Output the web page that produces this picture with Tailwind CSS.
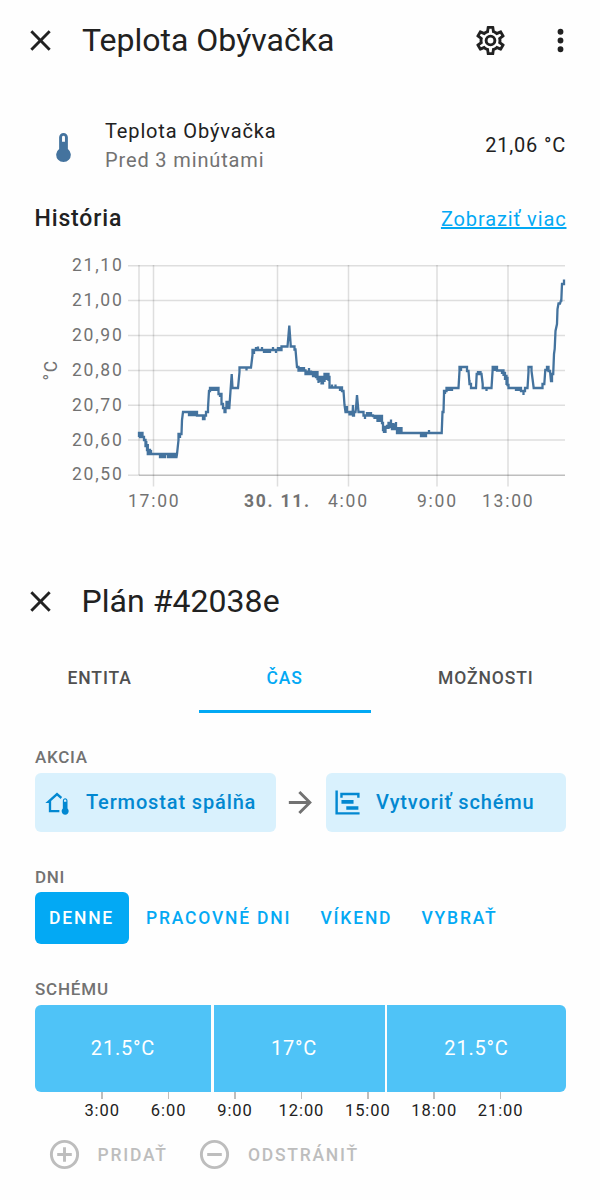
<!DOCTYPE html>
<html lang="sk">
<head>
<meta charset="utf-8">
<title>Teplota Obývačka</title>
<script src="https://cdn.jsdelivr.net/npm/@tailwindcss/browser@4"></script>
</head>
<body class="bg-[#fefefe] font-['Roboto',sans-serif] text-[#212121]">
<main class="flex h-[1200px] w-[600px] flex-col overflow-hidden">

  <!-- Entity dialog -->
  <section class="flex h-[561px] flex-col">
    <header class="flex h-[81px] items-center pl-[23px] pr-[22.5px]">
      <svg class="size-[35px] shrink-0" viewBox="0 0 24 24" fill="currentColor"><path d="M19,6.41L17.59,5L12,10.59L6.41,5L5,6.41L10.59,12L5,17.59L6.41,19L12,13.41L17.59,19L19,17.59L13.41,12L19,6.41Z"/></svg>
      <h1 class="ml-[24px] grow whitespace-nowrap pb-[2px] text-[32px] leading-[40px]">Teplota Obývačka</h1>
      <svg class="size-[35px] shrink-0" viewBox="0 0 24 24" fill="currentColor"><path d="M12,8A4,4 0 0,1 16,12A4,4 0 0,1 12,16A4,4 0 0,1 8,12A4,4 0 0,1 12,8M12,10A2,2 0 0,0 10,12A2,2 0 0,0 12,14A2,2 0 0,0 14,12A2,2 0 0,0 12,10M10,22C9.75,22 9.54,21.82 9.5,21.58L9.13,18.93C8.5,18.68 7.96,18.34 7.44,17.94L4.95,18.95C4.73,19.03 4.46,18.95 4.34,18.73L2.34,15.27C2.21,15.05 2.27,14.78 2.46,14.63L4.57,12.97L4.5,12L4.57,11L2.46,9.37C2.27,9.22 2.21,8.95 2.34,8.73L4.34,5.27C4.46,5.05 4.73,4.96 4.95,5.05L7.44,6.05C7.96,5.66 8.5,5.32 9.13,5.07L9.5,2.42C9.54,2.18 9.75,2 10,2H14C14.25,2 14.46,2.18 14.5,2.42L14.87,5.07C15.5,5.32 16.04,5.66 16.56,6.05L19.05,5.05C19.27,4.96 19.54,5.05 19.66,5.27L21.66,8.73C21.79,8.95 21.73,9.22 21.54,9.37L19.43,11L19.5,12L19.43,13L21.54,14.63C21.73,14.78 21.79,15.05 21.66,15.27L19.66,18.73C19.54,18.95 19.27,19.04 19.05,18.95L16.56,17.95C16.04,18.34 15.5,18.68 14.87,18.93L14.5,21.58C14.46,21.82 14.25,22 14,22H10M11.25,4L10.88,6.61C9.68,6.86 8.62,7.5 7.85,8.39L5.44,7.35L4.69,8.65L6.8,10.2C6.4,11.37 6.4,12.64 6.8,13.8L4.68,15.36L5.43,16.66L7.86,15.62C8.63,16.5 9.68,17.14 10.87,17.38L11.24,20H12.76L13.13,17.39C14.32,17.14 15.37,16.5 16.14,15.62L18.57,16.66L19.32,15.36L17.2,13.81C17.6,12.64 17.6,11.37 17.2,10.2L19.31,8.65L18.56,7.35L16.15,8.39C15.38,7.5 14.32,6.86 13.12,6.62L12.75,4H11.25Z"/></svg>
      <svg class="ml-[35px] size-[35px] shrink-0" viewBox="0 0 24 24" fill="currentColor"><path d="M12,16A2,2 0 0,1 14,18A2,2 0 0,1 12,20A2,2 0 0,1 10,18A2,2 0 0,1 12,16M12,10A2,2 0 0,1 14,12A2,2 0 0,1 12,14A2,2 0 0,1 10,12A2,2 0 0,1 12,10M12,4A2,2 0 0,1 14,6A2,2 0 0,1 12,8A2,2 0 0,1 10,6A2,2 0 0,1 12,4Z"/></svg>
    </header>

    <div class="mt-[35px] flex h-[59px] items-center pl-[46px] pr-[34px] tracking-[0.86px]">
      <svg class="mt-[3px] size-[35px] shrink-0 text-[#44739e]" viewBox="0 0 24 24" fill="currentColor"><path d="M15 13V5A3 3 0 0 0 9 5V13A5 5 0 1 0 15 13M12 4A1 1 0 0 1 13 5V8H11V5A1 1 0 0 1 12 4Z"/></svg>
      <div class="ml-[24px] grow text-[20px] leading-[29px]">
        <div>Teplota Obývačka</div>
        <div class="text-[#727272]">Pred 3 minútami</div>
      </div>
      <div class="text-[20px] leading-[29px] tracking-[0.8px]">21,06 °C</div>
    </div>

    <div class="mt-[29px] flex h-[30px] items-center justify-between pl-[34.5px] pr-[33.5px]">
      <h2 class="text-[23px] font-medium leading-[30px] tracking-[0.86px]">História</h2>
      <a class="text-[20px] leading-[30px] tracking-[0.87px] text-[#03a9f4] underline">Zobraziť viac</a>
    </div>

    <!-- History chart -->
    <svg class="mt-[16px] h-[270px] w-[600px] shrink-0" viewBox="0 250 600 270" font-family="Roboto, sans-serif" font-size="17.5" letter-spacing="1.74" fill="#727272">
      <g stroke="#000" stroke-opacity=".125" stroke-width="1.5">
        <path d="M128 265.7H565M128 300.6H565M128 335.5H565M128 370.5H565M128 405.2H565M128 440.1H565"/>
        <path d="M139 265V475M153.5 265V486.5M277.5 265V486.5M348.5 265V486.5M437 265V486.5M508 265V486.5"/>
        <path d="M128 475.2H139"/>
        <path d="M139 475.2H565" stroke-opacity=".25"/>
      </g>
      <g>
        <text x="72" y="271.2">21,10</text>
        <text x="72" y="306.4">21,00</text>
        <text x="72" y="341.3">20,90</text>
        <text x="72" y="376.1">20,80</text>
        <text x="72" y="411">20,70</text>
        <text x="72" y="445.9">20,60</text>
        <text x="72" y="480.3">20,50</text>
        <text x="128" y="506.8">17:00</text>
        <text x="244" y="506.8" font-weight="700">30. 11.</text>
        <text x="328" y="506.8">4:00</text>
        <text x="417" y="506.8">9:00</text>
        <text x="482" y="506.8">13:00</text>
        <text transform="translate(56.7 380.5) rotate(-90)">°C</text>
      </g>
      <path fill="none" stroke="#44739e" stroke-width="2.3" stroke-linejoin="miter" stroke-miterlimit="2" d="M139 437V433H140V437H141V433H142.5V437H144V440H145.5V446H146.3V441V446H147V450H147.8V444V454H149V450H150V454H151V450V454H160V457H161V454H162V457H163V454H164V457H165V454H168V457H169V454H170.5V457H172V454H173V457H174V454H175V457H176.5L177 454L178.5 440V434H180V438V434H181.5L182 420L183 412H189V415H190V412H191V415H192V412H193V415H194V412H195V415H196V412H197V415.5H203V419H204.5V415.5H206V412H208V408L209 391H210V388H211.5V391V388H213V391V388H215V391V388H217V391V388H218.5V394H220V397V394H221.5V404H223V408H224.5V412H225.5V408H226.5V402H227.5V409V402L228.5 408H229.3L230.5 391L231.7 374L232.5 388H238L239.5 372V367.5H246.5V370.5V367.5H251L252.5 355V350H254V354V350H256V347V350H258V346.5V350H262V347V350H264V353V350H266V353V350H268V353V350H270V353V350H273V347V350H276V353V350H278V347V350H280V347V350H281.5V346.5H287.5L288.5 335L289.3 325.5L290.7 345V346.5H294.5V349.5H295.5L297 367H298.5V370.5H300V367V370.5H302V367V370.5H304V367V370.5H305.5V374H307V370.5V374H309V368V374H311V370.5V374H313V371V376H314.5V371V376H316V371V377H317.5V371V379H318.5V383V377H320V382V377H321.5V384.5V378H323V384.5V377H324.5V382V374H326V380V374H327.5V380V374H328.5V381V377H329.5V387.5H332V384.5V387.5H335.5V384.5V387.5H340V391V387.5H342V391H343.5L344.5 405L345.5 412H347V406V412H349.5V415.5V412H351V415.5V412H352.5V415.5L353 405V415.5H354V412H355.5L356 408L357 395L358.5 412H363.5V415.5H365V419V415.5H367V412V415.5H369V412V415.5H371V412V415.5H373V416H374.5V419V416H376V419V416H377.5V422V416H379V422V416H380.5V422V416H382V423H383V430H384V433V427H385.5V433V427H387V429V426H388.5V429V423H390V427H391V419.5V427H392V423V429H393.5V423V429H395V424V429H396V422V429H397V427V433H398.5V427V433H400V427V433H401.5V427V433H421V436H422V433H423V436H424V433H425V436H426V433H429V430V433H441.7L442.5 412H443.5L444 394V391H445V394V391H446.5V388H448V391V388H450V391V388H452V391V388H458.5L459.5 371V367H461V371V367H467V371H468.5L469.5 384V380V384H471V388H476L476.7 374H478V371V374H479V371V374H480.5V371V374H481.5L482.7 384V388H486.5V391V388H491.5L492.7 369V367H494V371V367H496V371V367H497V370.5H502V374V370.5H503.5V376V373H505V380V376H506.5V385V378H507.5V385H508.5V388H516V391V388H518V391V388H520V391V388H521V391H523.5V395V391H525V388H527.5L528.5 372V367H531.5V371L533.7 388H542.5V384H544.3L545.3 370H547V367H548.5V371H550L551 381H552V374H553.2L554 354L554.7 349L555.5 331L557 324L557.5 309L558.5 303.5H560L561 300.5H561.3L562 284H564V279.5"/>
    </svg>
  </section>

  <!-- Schedule dialog -->
  <section class="flex h-[639px] flex-col">
    <header class="flex h-[81px] items-center pl-[23px]">
      <svg class="size-[35px] shrink-0" viewBox="0 0 24 24" fill="currentColor"><path d="M19,6.41L17.59,5L12,10.59L6.41,5L5,6.41L10.59,12L5,17.59L6.41,19L12,13.41L17.59,19L19,17.59L13.41,12L19,6.41Z"/></svg>
      <h1 class="ml-[23.5px] whitespace-nowrap pb-[2px] text-[32px] leading-[40px] tracking-[0.05px]">Plán #42038e</h1>
    </header>

    <nav class="flex h-[71px] text-[17.5px] font-medium leading-[73px] tracking-[0.9px] text-[#505050]">
      <div class="w-[199px] pl-[67.5px]">ENTITA</div>
      <div class="w-[171.5px] border-b-[3px] border-[#03a9f4] pl-[67.5px] text-[#03a9f4]">ČAS</div>
      <div class="pl-[67.5px]">MOŽNOSTI</div>
    </nav>

    <div class="flex flex-col pl-[35px] pr-[34px]">
      <h3 class="mt-[33px] h-[27px] text-[17px] font-medium leading-[22px] tracking-[0.72px] text-[#727272]">AKCIA</h3>
      <div class="flex h-[59px] items-center justify-between text-[20px] font-medium tracking-[0.86px] text-[#0288d1]">
        <div class="flex h-full w-[240.5px] items-center rounded-md bg-[#d9f1fd] pl-[8px]">
          <svg class="size-[28px] shrink-0" viewBox="0 0 24 24" fill="currentColor"><path d="M19 8C20.11 8 21 8.9 21 10V16.76C21.61 17.31 22 18.11 22 19C22 20.66 20.66 22 19 22C17.34 22 16 20.66 16 19C16 18.11 16.39 17.31 17 16.76V10C17 8.9 17.9 8 19 8M19 9C18.45 9 18 9.45 18 10V11H20V10C20 9.45 19.55 9 19 9M12 5.69L7 10.19V18H14.1L14 19L14.1 20H5V12H2L12 3L16.4 6.96C15.89 7.4 15.5 7.97 15.25 8.61L12 5.69Z"/></svg>
          <span class="ml-[15px] whitespace-nowrap pb-[1px]">Termostat spálňa</span>
        </div>
        <svg class="size-[35px] shrink-0 text-[#727272]" viewBox="0 0 24 24" fill="currentColor"><path d="M4,11V13H16L10.5,18.5L11.92,19.92L19.84,12L11.92,4.08L10.5,5.5L16,11H4Z"/></svg>
        <div class="flex h-full w-[240.5px] items-center rounded-md bg-[#d9f1fd] pl-[7px]">
          <svg class="size-[29px] shrink-0" viewBox="0 0 24 24" fill="currentColor"><path d="M2,2H4V20H22V22H2V2M7,10H17V13H7V10M11,15H21V18H11V15M6,4H22V8H20V6H8V8H6V4Z"/></svg>
          <span class="ml-[14.5px] whitespace-nowrap pb-[1px]">Vytvoriť schému</span>
        </div>
      </div>

      <h3 class="mt-[33.5px] h-[26.5px] text-[17px] font-medium leading-[22px] tracking-[0.72px] text-[#727272]">DNI</h3>
      <div class="flex h-[52px] items-center whitespace-nowrap text-[17.5px] font-medium tracking-[1.8px] text-[#03a9f4]">
        <div class="flex h-full w-[93.5px] items-center rounded-md bg-[#03a9f4] pl-[14px] pt-[1px] text-white">DENNE</div>
        <div class="w-[192px] pl-[17.5px] pt-[1px]">PRACOVNÉ DNI</div>
        <div class="w-[101px] pt-[1px]">VÍKEND</div>
        <div class="pt-[1px]">VYBRAŤ</div>
      </div>

      <h3 class="mt-[34px] h-[26.5px] text-[17px] font-medium leading-[22px] tracking-[0.8px] text-[#727272]">SCHÉMU</h3>
      <div class="flex h-[87.5px] gap-[2.5px] overflow-hidden rounded-md text-[20px] tracking-[0.8px] text-white">
        <div class="flex w-[176px] items-center justify-center bg-[#4fc3f7] pb-[1px]">21.5°C</div>
        <div class="flex w-[171px] items-center justify-center bg-[#4fc3f7] pr-[10px] pb-[1px]">17°C</div>
        <div class="flex grow items-center justify-center bg-[#4fc3f7] pb-[1px]">21.5°C</div>
      </div>
      <div class="ml-[34px] flex w-[464.8px] text-[16.5px] leading-[23px] tracking-[0.95px]">
        <div class="flex flex-1 flex-col items-center"><i class="h-[7px] w-[1.5px] bg-[#bdbdbd]"></i>3:00</div>
        <div class="flex flex-1 flex-col items-center"><i class="h-[7px] w-[1.5px] bg-[#bdbdbd]"></i>6:00</div>
        <div class="flex flex-1 flex-col items-center"><i class="h-[7px] w-[1.5px] bg-[#bdbdbd]"></i>9:00</div>
        <div class="flex flex-1 flex-col items-center"><i class="h-[7px] w-[1.5px] bg-[#bdbdbd]"></i>12:00</div>
        <div class="flex flex-1 flex-col items-center"><i class="h-[7px] w-[1.5px] bg-[#bdbdbd]"></i>15:00</div>
        <div class="flex flex-1 flex-col items-center"><i class="h-[7px] w-[1.5px] bg-[#bdbdbd]"></i>18:00</div>
        <div class="flex flex-1 flex-col items-center"><i class="h-[7px] w-[1.5px] bg-[#bdbdbd]"></i>21:00</div>
      </div>
      <div class="mt-[15px] flex h-[35px] items-center pl-[11.5px] text-[17.5px] font-medium tracking-[1.75px] text-[#bdbdbd]">
        <svg class="size-[35px] shrink-0" viewBox="0 0 24 24" fill="currentColor"><path d="M12,20C7.59,20 4,16.41 4,12C4,7.59 7.59,4 12,4C16.41,4 20,7.59 20,12C20,16.41 16.41,20 12,20M12,2A10,10 0 0,0 2,12A10,10 0 0,0 12,22A10,10 0 0,0 22,12A10,10 0 0,0 12,2M13,7H11V11H7V13H11V17H13V13H17V11H13V7Z"/></svg>
        <span class="ml-[16px] w-[99.5px] pt-[1px]">PRIDAŤ</span>
        <svg class="size-[35px] shrink-0" viewBox="0 0 24 24" fill="currentColor"><path d="M12,20C7.59,20 4,16.41 4,12C4,7.59 7.59,4 12,4C16.41,4 20,7.59 20,12C20,16.41 16.41,20 12,20M12,2A10,10 0 0,0 2,12A10,10 0 0,0 12,22A10,10 0 0,0 22,12A10,10 0 0,0 12,2M7,13H17V11H7"/></svg>
        <span class="ml-[16px] pt-[1px]">ODSTRÁNIŤ</span>
      </div>
    </div>
  </section>
</main>
</body>
</html>
